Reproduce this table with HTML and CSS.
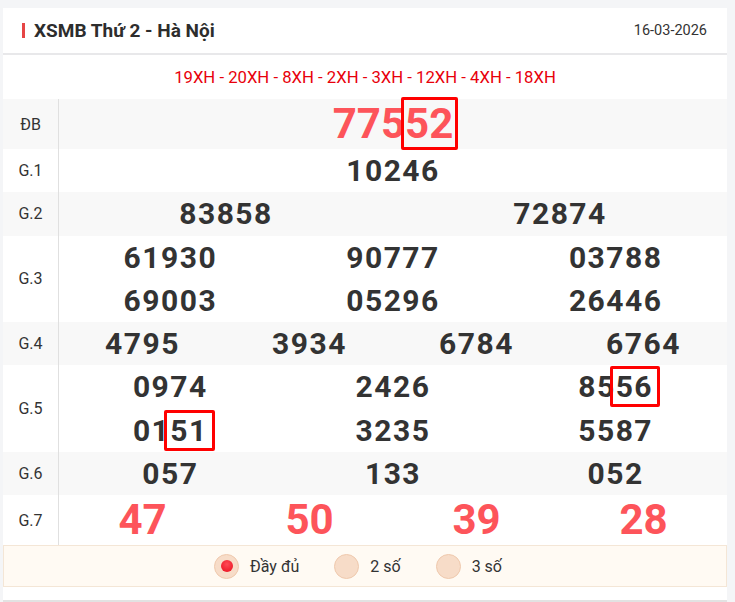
FILE: index.html
```html
<!DOCTYPE html>
<html lang="vi">
<head>
<meta charset="utf-8">
<title>XSMB Thứ 2 - Hà Nội</title>
<link rel="stylesheet" href="styles.css">
</head>
<body>
<div class="card">
  <div class="head">
    <h2 class="title">XSMB Thứ 2 - Hà Nội</h2>
    <span class="date">16-03-2026</span>
  </div>
  <div class="codes">19XH - 20XH - 8XH - 2XH - 3XH - 12XH - 4XH - 18XH</div>
  <div class="table">
    <div class="row alt tall">
      <div class="lbl">ĐB</div>
      <div class="vals c1"><span class="num big red">775<span class="hl hl-big">52</span></span></div>
    </div>
    <div class="row">
      <div class="lbl">G.1</div>
      <div class="vals c1"><span class="num">10246</span></div>
    </div>
    <div class="row alt">
      <div class="lbl">G.2</div>
      <div class="vals c2"><span class="num">83858</span><span class="num">72874</span></div>
    </div>
    <div class="row">
      <div class="lbl">G.3</div>
      <div class="vals c3">
        <span class="num">61930</span><span class="num">90777</span><span class="num">03788</span>
        <span class="num">69003</span><span class="num">05296</span><span class="num">26446</span>
      </div>
    </div>
    <div class="row alt">
      <div class="lbl">G.4</div>
      <div class="vals c4"><span class="num">4795</span><span class="num">3934</span><span class="num">6784</span><span class="num">6764</span></div>
    </div>
    <div class="row">
      <div class="lbl">G.5</div>
      <div class="vals c3">
        <span class="num">0974</span><span class="num">2426</span><span class="num">85<span class="hl">56</span></span>
        <span class="num">01<span class="hl">51</span></span><span class="num">3235</span><span class="num">5587</span>
      </div>
    </div>
    <div class="row alt">
      <div class="lbl">G.6</div>
      <div class="vals c3"><span class="num">057</span><span class="num">133</span><span class="num">052</span></div>
    </div>
    <div class="row tall">
      <div class="lbl">G.7</div>
      <div class="vals c4"><span class="num big red">47</span><span class="num big red">50</span><span class="num big red">39</span><span class="num big red">28</span></div>
    </div>
  </div>
  <div class="opts">
    <label class="opt"><span class="radio on"></span><span class="opt-text">Đầy đủ</span></label>
    <label class="opt"><span class="radio"></span><span class="opt-text">2 số</span></label>
    <label class="opt"><span class="radio"></span><span class="opt-text">3 số</span></label>
  </div>
</div>
</body>
</html>
```

FILE: styles.css
```css
html, body {
  margin: 0;
  padding: 0;
  background: #f4f5f7;
}
body {
  padding: 8px 8px 0 3px;
  font-family: Roboto, "Liberation Sans", sans-serif;
  color: #333;
}
.card {
  background: #fff;
  width: 724px;
  padding-bottom: 13px;
  border-bottom: 2px solid #e2e2e2;
}
.head {
  display: flex;
  align-items: center;
  justify-content: space-between;
  height: 45px;
  padding: 0 20px 0 19px;
  border-bottom: 2px solid #e8e8ea;
}
.title {
  margin: 0;
  font-size: 19px;
  font-weight: 700;
  color: #2d2d2d;
  padding-left: 9px;
  border-left: 3px solid #e64545;
  line-height: 15px;
  height: 15px;
  display: flex;
  align-items: center;
}
.date {
  font-size: 14.5px;
  color: #333;
}
.codes {
  height: 44px;
  display: flex;
  align-items: center;
  justify-content: center;
  font-size: 16.7px;
  color: #e8000b;
}
.row {
  display: grid;
  grid-template-columns: 56px 1fr;
}
.row.alt {
  background: #f8f8f8;
}
.lbl {
  display: flex;
  align-items: center;
  justify-content: center;
  font-size: 16px;
  color: #333;
  border-right: 1px solid #e0e0e0;
}
.vals {
  display: grid;
  justify-items: center;
}
.c1 { grid-template-columns: 1fr; }
.c2 { grid-template-columns: repeat(2, 1fr); }
.c3 { grid-template-columns: repeat(3, 1fr); }
.c4 { grid-template-columns: repeat(4, 1fr); }
.num {
  font-size: 30px;
  font-weight: 700;
  line-height: 43.25px;
  letter-spacing: 1.5px;
  color: #333;
}
.tall .num {
  line-height: 50px;
}
.num.big {
  font-size: 42px;
  letter-spacing: 0;
}
.num.red {
  color: #fd545a;
}
.hl {
  position: relative;
}
.hl::after {
  content: "";
  position: absolute;
  left: -6px;
  right: -7px;
  top: -3px;
  bottom: -3px;
  border: 3px solid #ff0000;
  border-radius: 2px;
}
.hl-big::after {
  left: -4px;
  right: -5px;
  top: -2px;
  bottom: -2px;
}
.opts {
  display: flex;
  align-items: center;
  justify-content: center;
  gap: 35px;
  height: 40px;
  background: #fffaf3;
  border: 1px solid #f4e6d6;
  padding-right: 14px;
}
.opt {
  display: flex;
  align-items: center;
  gap: 11px;
  font-size: 16px;
  color: #333;
}
.radio {
  width: 23px;
  height: 23px;
  border-radius: 50%;
  background: #f7dcc8;
  border: 1px solid #efc9ad;
  display: flex;
  align-items: center;
  justify-content: center;
}
.radio.on::after {
  content: "";
  width: 12px;
  height: 12px;
  border-radius: 50%;
  background: radial-gradient(circle at 50% 35%, #ff4a55, #e80c1c);
}
```
